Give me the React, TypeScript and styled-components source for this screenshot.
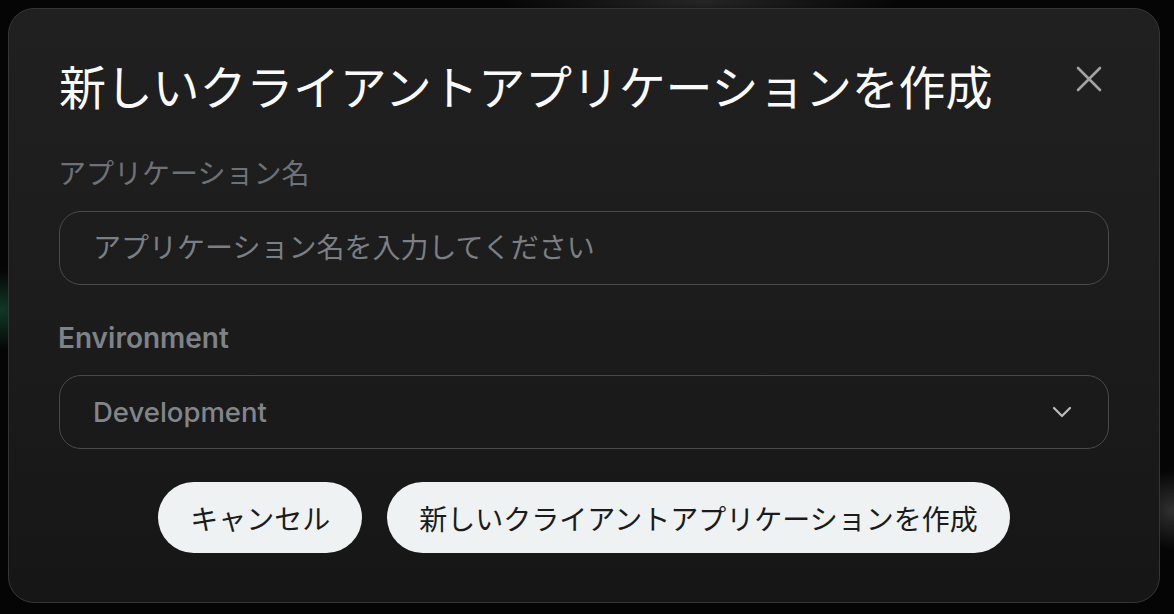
import React, { useState } from "react";
import styled, { createGlobalStyle } from "styled-components";

const GlobalStyle = createGlobalStyle`
  html, body {
    margin: 0;
    padding: 0;
    background: #050505;
    font-family: Inter, "Noto Sans CJK JP", sans-serif;
  }
  * { box-sizing: border-box; }
`;

const Backdrop = styled.div`
  width: 1174px;
  height: 614px;
  padding: 8px 14px 11px 8px;
  background:
    radial-gradient(circle at 2px 310px, rgba(30, 120, 80, 0.45), transparent 40px),
    radial-gradient(ellipse 200px 20px at 700px 2px, rgba(70, 70, 70, 0.5), transparent),
    radial-gradient(circle at 1172px 510px, rgba(90, 90, 90, 0.5), transparent 40px),
    #050505;
  overflow: hidden;
`;

const Modal = styled.div`
  width: 1152px;
  display: flex;
  flex-direction: column;
  padding: 51px 50px 49px 50px;
  border: 1px solid #353535;
  border-radius: 26px;
  background: linear-gradient(180deg, #202020 0%, #1c1c1c 50%, #161616 100%);
  color: #fff;
`;

const Header = styled.div`
  display: flex;
  justify-content: space-between;
  align-items: flex-start;
`;

const Title = styled.h2`
  margin: 0;
  font-size: 47px;
  line-height: 56px;
  font-weight: 400;
  color: #fafafa;
  letter-spacing: -0.2px;
`;

const CloseButton = styled.button`
  width: 40px;
  height: 40px;
  margin-top: -1px;
  display: flex;
  align-items: center;
  justify-content: center;
  padding: 0;
  border: none;
  background: transparent;
  color: #a3a3a3;
  cursor: pointer;
`;

const Field = styled.div<{ $gap: number }>`
  display: flex;
  flex-direction: column;
  gap: 19px;
  margin-top: ${(p) => p.$gap}px;
`;

const Label = styled.label<{ $strong?: boolean }>`
  margin-left: ${(p) => (p.$strong ? -1 : -1)}px;
  font-size: 28px;
  line-height: 36px;
  font-weight: ${(p) => (p.$strong ? 600 : 400)};
  color: ${(p) => (p.$strong ? "#7e8388" : "#6d7277")};
`;

const TextInput = styled.input`
  height: 74px;
  width: 100%;
  padding: 0 33px;
  border: 1.5px solid #4a4a4a;
  border-radius: 22px;
  background: transparent;
  font-family: inherit;
  font-size: 28px;
  color: #e5e5e5;
  outline: none;
  &::placeholder {
    color: #7b7f83;
  }
`;

const SelectBox = styled.div`
  height: 74px;
  display: flex;
  align-items: center;
  justify-content: space-between;
  padding: 0 35px 0 33px;
  border: 1.5px solid #4a4a4a;
  border-radius: 22px;
  font-size: 27.5px;
  font-weight: 500;
  color: #81868b;
  cursor: pointer;
`;

const Actions = styled.div`
  display: flex;
  justify-content: center;
  gap: 25px;
  margin-top: 33px;
`;

const PillButton = styled.button`
  height: 71px;
  padding: 0 32px;
  border: none;
  border-radius: 36px;
  background: #eef2f3;
  color: #1b1b1b;
  font-family: inherit;
  font-size: 28px;
  font-weight: 400;
  cursor: pointer;
`;

const App = () => {
  const [name, setName] = useState("");
  return (
    <>
      <GlobalStyle />
      <Backdrop>
        <Modal>
          <Header>
            <Title>新しいクライアントアプリケーションを作成</Title>
            <CloseButton aria-label="閉じる">
              <svg width="26" height="26" viewBox="0 0 26 26" fill="none">
                <path
                  d="M2 2 L24 24 M24 2 L2 24"
                  stroke="currentColor"
                  strokeWidth="2.6"
                  strokeLinecap="round"
                />
              </svg>
            </CloseButton>
          </Header>
          <Field $gap={40}>
            <Label>アプリケーション名</Label>
            <TextInput
              value={name}
              onChange={(e) => setName(e.target.value)}
              placeholder="アプリケーション名を入力してください"
            />
          </Field>
          <Field $gap={35}>
            <Label $strong>Environment</Label>
            <SelectBox>
              <span>Development</span>
              <svg width="22" height="14" viewBox="0 0 22 14" fill="none">
                <path
                  d="M3 3 L11 11 L19 3"
                  stroke="#bdbdbd"
                  strokeWidth="2.2"
                  strokeLinecap="round"
                  strokeLinejoin="round"
                />
              </svg>
            </SelectBox>
          </Field>
          <Actions>
            <PillButton>キャンセル</PillButton>
            <PillButton>新しいクライアントアプリケーションを作成</PillButton>
          </Actions>
        </Modal>
      </Backdrop>
    </>
  );
};

export default App;
